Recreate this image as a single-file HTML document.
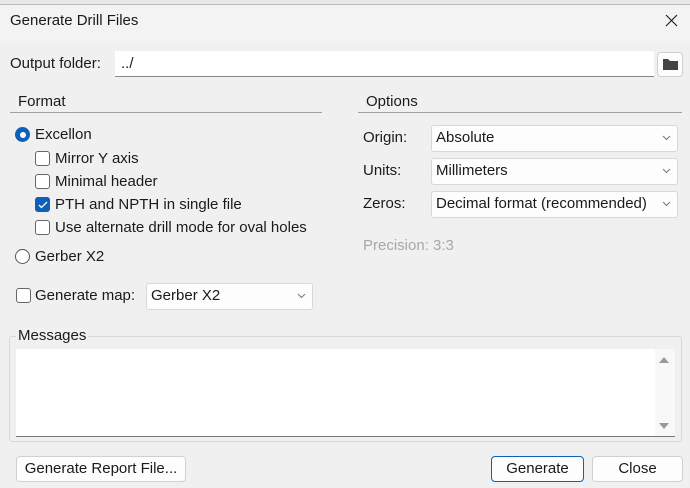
<!DOCTYPE html>
<html><head><meta charset="utf-8"><style>
*{box-sizing:border-box;margin:0;padding:0}
body{width:690px;height:488px;background:#f0f0f0;font-family:"Liberation Sans",sans-serif;font-size:15px;color:#1a1a1a;position:relative;overflow:hidden}
.a{position:absolute;white-space:nowrap;line-height:16px}
.combo{position:absolute;background:#fdfdfd;border:1px solid #d8d8d8;border-radius:3px;padding-left:4px;line-height:24px}
.combo svg{position:absolute;right:6px;top:9px}
.cb{position:absolute;width:15px;height:15px;border:1px solid #666;border-radius:3px;background:#fff}
.btn{position:absolute;background:#fdfdfd;border:1px solid #d0d0d0;border-radius:4px;text-align:center;line-height:24px}
</style></head><body>
<div style="position:absolute;left:0;top:0;width:690px;height:5px;background:#e8e8e8;border-bottom:1px solid #bbb"></div>
<div style="position:absolute;left:0;top:5px;width:690px;height:36px;background:#f3f3f3"></div>
<div class="a" style="left:10px;top:13px;font-size:15px">Generate Drill Files</div>
<svg style="position:absolute;left:665px;top:14px" width="13" height="13"><path d="M1 1L12 12M12 1L1 12" stroke="#222" stroke-width="1.2"/></svg>

<div class="a" style="left:10px;top:56px">Output folder:</div>
<div style="position:absolute;left:115px;top:51px;width:539px;height:26px;background:#fff;border-bottom:1px solid #888"></div>
<div class="a" style="left:121px;top:56px">../</div>
<div class="btn" style="left:657px;top:52px;width:26px;height:25px"></div>
<svg style="position:absolute;left:663px;top:58px" width="15" height="13"><path d="M0 1h5l2 2h8v9H0z" fill="#444"/></svg>

<div class="a" style="left:18px;top:94px">Format</div>
<div style="position:absolute;left:10px;top:112px;width:312px;height:1px;background:#a0a0a0"></div>
<div class="a" style="left:366px;top:94px">Options</div>
<div style="position:absolute;left:358px;top:112px;width:324px;height:1px;background:#a0a0a0"></div>

<div style="position:absolute;left:15px;top:127px;width:15px;height:15px;border-radius:50%;background:#0f5fb8"></div>
<div style="position:absolute;left:19.5px;top:131.5px;width:6px;height:6px;border-radius:50%;background:#fff"></div>
<div class="a" style="left:35px;top:127px">Excellon</div>

<div class="cb" style="left:35px;top:151px"></div><div class="a" style="left:55px;top:151px">Mirror Y axis</div>
<div class="cb" style="left:35px;top:174px"></div><div class="a" style="left:55px;top:174px">Minimal header</div>
<div class="cb" style="left:35px;top:197px;background:#0f5fb8;border-color:#0f5fb8"></div>
<svg style="position:absolute;left:38px;top:201px" width="10" height="8"><path d="M1 4l2.5 2.5L9 1" stroke="#fff" stroke-width="1.3" fill="none"/></svg>
<div class="a" style="left:55px;top:197px">PTH and NPTH in single file</div>
<div class="cb" style="left:35px;top:220px"></div><div class="a" style="left:55px;top:220px">Use alternate drill mode for oval holes</div>

<div style="position:absolute;left:15px;top:249px;width:15px;height:15px;border-radius:50%;border:1px solid #555;background:#fff"></div>
<div class="a" style="left:35px;top:249px">Gerber X2</div>

<div class="cb" style="left:16px;top:288px"></div><div class="a" style="left:35px;top:288px">Generate map:</div>
<div class="combo" style="left:146px;top:283px;width:167px;height:27px">Gerber X2<svg width="9" height="6"><path d="M1 1l3.5 3.5L8 1" stroke="#777" fill="none"/></svg></div>

<div class="a" style="left:363px;top:130px">Origin:</div>
<div class="combo" style="left:431px;top:125px;width:247px;height:27px">Absolute<svg width="9" height="6"><path d="M1 1l3.5 3.5L8 1" stroke="#777" fill="none"/></svg></div>
<div class="a" style="left:363px;top:163px">Units:</div>
<div class="combo" style="left:431px;top:158px;width:247px;height:27px">Millimeters<svg width="9" height="6"><path d="M1 1l3.5 3.5L8 1" stroke="#777" fill="none"/></svg></div>
<div class="a" style="left:363px;top:196px">Zeros:</div>
<div class="combo" style="left:431px;top:191px;width:247px;height:27px">Decimal format (recommended)<svg width="9" height="6"><path d="M1 1l3.5 3.5L8 1" stroke="#777" fill="none"/></svg></div>
<div class="a" style="left:363px;top:238px;color:#a8a8a8">Precision: 3:3</div>

<div style="position:absolute;left:9px;top:336px;width:673px;height:106px;border:1px solid #d8d8d8;border-radius:3px"></div>
<div class="a" style="left:16px;top:328px;background:#f0f0f0;padding:0 2px">Messages</div>
<div style="position:absolute;left:16px;top:349px;width:659px;height:88px;background:#fff;border-bottom:1px solid #777"></div>
<div style="position:absolute;left:655px;top:349px;width:20px;height:87px;background:#f8f8f8"></div>
<svg style="position:absolute;left:659px;top:356px" width="10" height="8"><path d="M0 7L5 1L10 7z" fill="#999"/></svg>
<svg style="position:absolute;left:659px;top:422px" width="10" height="8"><path d="M0 1L5 7L10 1z" fill="#999"/></svg>

<div class="btn" style="left:16px;top:456px;width:170px;height:26px">Generate Report File...</div>
<div class="btn" style="left:491px;top:456px;width:93px;height:26px;border-color:#0f5fb8">Generate</div>
<div class="btn" style="left:592px;top:456px;width:91px;height:26px">Close</div>
</body></html>
